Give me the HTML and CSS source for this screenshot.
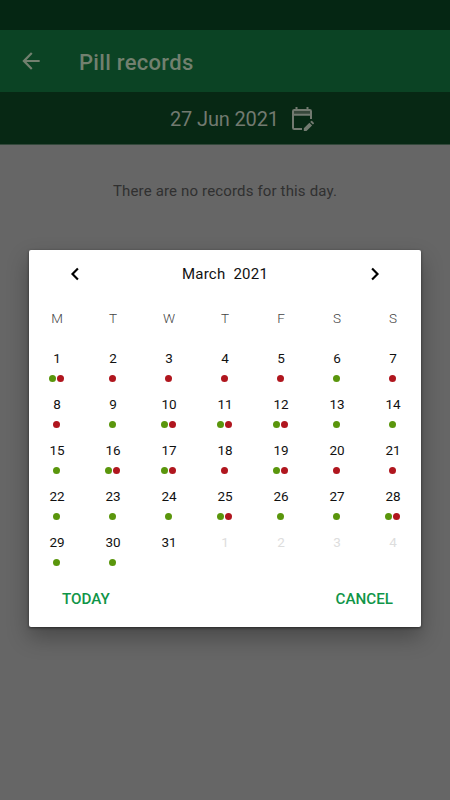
FILE: index.html
```
<!DOCTYPE html>
<html lang="en">
<head>
    <meta charset="UTF-8">
    <meta name="viewport" content="width=device-width, initial-scale=1.0">
    <title>Pill records</title>
    <link rel="stylesheet" href="styles.css">
</head>
<body>
    <div class="status-bar"></div>
    <header class="app-bar">
        <svg class="back" viewBox="0 0 24 24"><path d="M20 11H7.83l5.59-5.59L12 4l-8 8 8 8 1.41-1.41L7.83 13H20v-2z"/></svg>
        <h1>Pill records</h1>
    </header>
    <div class="date-bar">
        <span>27 Jun 2021</span>
        <svg class="edit-date" viewBox="0 0 26 26">
            <path class="band" d="M4 5h18v3H4z"/>
            <path class="frame" d="M22 13V5.200q0-1.200-1.200-1.200H5.200Q4 4 4 5.200v16.600Q4 23 5.200 23H13M4 8.700h18M7.500 4V1M18.500 4V1"/>
            <path d="M14.800 25v-2.700l5.600-5.600 2.700 2.700-5.600 5.600h-2.700zM21.200 15.900l.9-.9q.5-.5 1 0l1.700 1.700q.5.5 0 1l-.9.900z"/>
        </svg>
    </div>
    <p class="empty">There are no records for this day.</p>

    <!-- Calendar dialog -->
    <div class="dialog">
        <div class="month-row">
            <svg class="arrow" viewBox="0 0 24 24"><path d="M15.500 5.500L9 12l6.500 6.500"/></svg>
            <span class="month">March&nbsp; 2021</span>
            <svg class="arrow" viewBox="0 0 24 24"><path d="M8.500 5.500L15 12l-6.500 6.500"/></svg>
        </div>
        <div class="weekdays">
            <span>M</span><span>T</span><span>W</span><span>T</span><span>F</span><span>S</span><span>S</span>
        </div>
        <div class="days">
            <div class="day">1<div class="dots"><i class="green"></i><i class="red"></i></div></div>
            <div class="day">2<div class="dots"><i class="red"></i></div></div>
            <div class="day">3<div class="dots"><i class="red"></i></div></div>
            <div class="day">4<div class="dots"><i class="red"></i></div></div>
            <div class="day">5<div class="dots"><i class="red"></i></div></div>
            <div class="day">6<div class="dots"><i class="green"></i></div></div>
            <div class="day">7<div class="dots"><i class="red"></i></div></div>

            <div class="day">8<div class="dots"><i class="red"></i></div></div>
            <div class="day">9<div class="dots"><i class="green"></i></div></div>
            <div class="day">10<div class="dots"><i class="green"></i><i class="red"></i></div></div>
            <div class="day">11<div class="dots"><i class="green"></i><i class="red"></i></div></div>
            <div class="day">12<div class="dots"><i class="green"></i><i class="red"></i></div></div>
            <div class="day">13<div class="dots"><i class="green"></i></div></div>
            <div class="day">14<div class="dots"><i class="green"></i></div></div>

            <div class="day">15<div class="dots"><i class="green"></i></div></div>
            <div class="day">16<div class="dots"><i class="green"></i><i class="red"></i></div></div>
            <div class="day">17<div class="dots"><i class="green"></i><i class="red"></i></div></div>
            <div class="day">18<div class="dots"><i class="red"></i></div></div>
            <div class="day">19<div class="dots"><i class="green"></i><i class="red"></i></div></div>
            <div class="day">20<div class="dots"><i class="red"></i></div></div>
            <div class="day">21<div class="dots"><i class="red"></i></div></div>

            <div class="day">22<div class="dots"><i class="green"></i></div></div>
            <div class="day">23<div class="dots"><i class="green"></i></div></div>
            <div class="day">24<div class="dots"><i class="green"></i></div></div>
            <div class="day">25<div class="dots"><i class="green"></i><i class="red"></i></div></div>
            <div class="day">26<div class="dots"><i class="green"></i></div></div>
            <div class="day">27<div class="dots"><i class="green"></i></div></div>
            <div class="day">28<div class="dots"><i class="green"></i><i class="red"></i></div></div>

            <div class="day">29<div class="dots"><i class="green"></i></div></div>
            <div class="day">30<div class="dots"><i class="green"></i></div></div>
            <div class="day">31</div>
            <div class="day other">1</div>
            <div class="day other">2</div>
            <div class="day other">3</div>
            <div class="day other">4</div>
        </div>
        <div class="actions">
            <button>TODAY</button>
            <button>CANCEL</button>
        </div>
    </div>
</body>
</html>
```
FILE: styles.css
```
* {
    box-sizing: border-box;
}
body {
    margin: 0;
    height: 800px;
    overflow: hidden;
    background-color: #666;
    font-family: Roboto, sans-serif;
}
.status-bar {
    height: 30px;
    background-color: #052613;
}
.app-bar {
    display: flex;
    align-items: center;
    height: 62px;
    padding: 0 0 0 18px;
    background-color: #0b4324;
    color: #72806f;
}
.app-bar h1 {
    margin: 2px 0 0 35px;
    font-size: 22px;
    font-weight: 500;
    letter-spacing: 0.3px;
}
.back {
    width: 26px;
    height: 26px;
    fill: #72806f;
}
.date-bar {
    display: flex;
    align-items: center;
    height: 53px;
    padding: 0 0 0 170px;
    background-color: #072814;
    border-bottom: 1px solid #33483b;
    color: #727a70;
    font-size: 20px;
    letter-spacing: -0.15px;
}
.date-bar span {
    margin-top: 2px;
}
.edit-date {
    width: 26px;
    height: 26px;
    margin: 1px 0 0 10px;
    fill: #727a70;
}
.edit-date .frame {
    fill: none;
    stroke: #727a70;
    stroke-width: 2;
}
.edit-date .band {
    fill: #37483b;
}
.empty {
    margin: 35px 0 0;
    text-align: center;
    font-size: 15px;
    line-height: 22px;
    letter-spacing: 0.15px;
    color: #303030;
}
.dialog {
    position: absolute;
    top: 250px;
    left: 29px;
    width: 392px;
    height: 377px;
    background-color: #fff;
    border-radius: 2px;
    box-shadow: 0 10px 22px rgba(0, 0, 0, 0.3), 0 1px 3px rgba(0, 0, 0, 0.5);
}
.month-row {
    display: flex;
    align-items: center;
    justify-content: space-between;
    height: 48px;
    padding: 0 36px;
}
.month {
    font-size: 15px;
    letter-spacing: 0.25px;
    color: #111;
}
.arrow {
    width: 20px;
    height: 20px;
    fill: none;
    stroke: #000;
    stroke-width: 2.6;
}
.weekdays,
.days {
    display: grid;
    grid-template-columns: repeat(7, 56px);
    text-align: center;
}
.weekdays {
    height: 50px;
    line-height: 41px;
    font-size: 13.5px;
    font-weight: 300;
    color: #444;
}
.days {
    grid-auto-rows: 46px;
}
.day {
    padding-top: 2px;
    font-size: 13.5px;
    line-height: 17px;
    color: #111;
}
.day.other {
    color: #ddd;
}
.dots {
    display: flex;
    justify-content: center;
    align-items: center;
    gap: 1px;
    height: 8px;
    margin-top: 7px;
    padding-right: 1px;
}
.dots i {
    width: 7px;
    height: 7px;
    border-radius: 50%;
}
.green {
    background-color: #5a960c;
}
.red {
    background-color: #b0161e;
}
.actions {
    display: flex;
    justify-content: space-between;
    padding: 11px 28px 0 33px;
}
.actions button {
    padding: 0;
    border: none;
    background: none;
    font: 500 15.2px/20px Roboto, sans-serif;
    color: #109548;
}
```
